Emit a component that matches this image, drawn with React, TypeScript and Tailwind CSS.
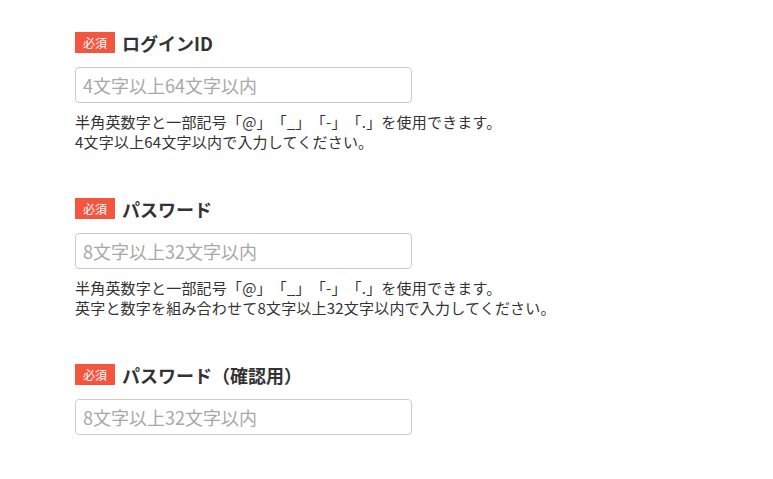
const fields = [
  {
    label: "ログインID",
    placeholder: "4文字以上64文字以内",
    type: "text",
    help: ["半角英数字と一部記号「@」「_」「-」「.」を使用できます。", "4文字以上64文字以内で入力してください。"],
  },
  {
    label: "パスワード",
    placeholder: "8文字以上32文字以内",
    type: "password",
    help: [
      "半角英数字と一部記号「@」「_」「-」「.」を使用できます。",
      "英字と数字を組み合わせて8文字以上32文字以内で入力してください。",
    ],
  },
  {
    label: "パスワード（確認用）",
    placeholder: "8文字以上32文字以内",
    type: "password",
    help: [],
  },
]

function RequiredBadge() {
  return (
    <span className="inline-flex h-[21px] items-center bg-[#f4553f] px-[8px] text-[12px] leading-none text-white">
      必須
    </span>
  )
}

export default function App() {
  return (
    <div
      className="min-h-screen bg-white pl-[75px] pt-[32px] text-[#333] [text-spacing-trim:space-all]"
      style={{ fontFamily: '"Noto Sans CJK JP", "Noto Sans", sans-serif' }}
    >
      {fields.map((f) => (
        <div key={f.label} className="mb-[46px] w-[337px]">
          <div className="flex h-[21px] items-center gap-[7px]">
            <RequiredBadge />
            <span className="text-[18px] font-bold leading-none">{f.label}</span>
          </div>
          <input
            type={f.type}
            placeholder={f.placeholder}
            className="mt-[14px] block h-[36px] w-[337px] rounded-[4px] border border-[#cccccc] bg-white px-[7px] text-[18px] outline-none placeholder:text-[#a8a8a8]"
          />
          {f.help.length > 0 && (
            <div className="mt-[9px] whitespace-nowrap text-[15px] leading-[20px] tracking-[0.2px]">
              {f.help.map((line) => (
                <p key={line}>{line}</p>
              ))}
            </div>
          )}
        </div>
      ))}
    </div>
  )
}
